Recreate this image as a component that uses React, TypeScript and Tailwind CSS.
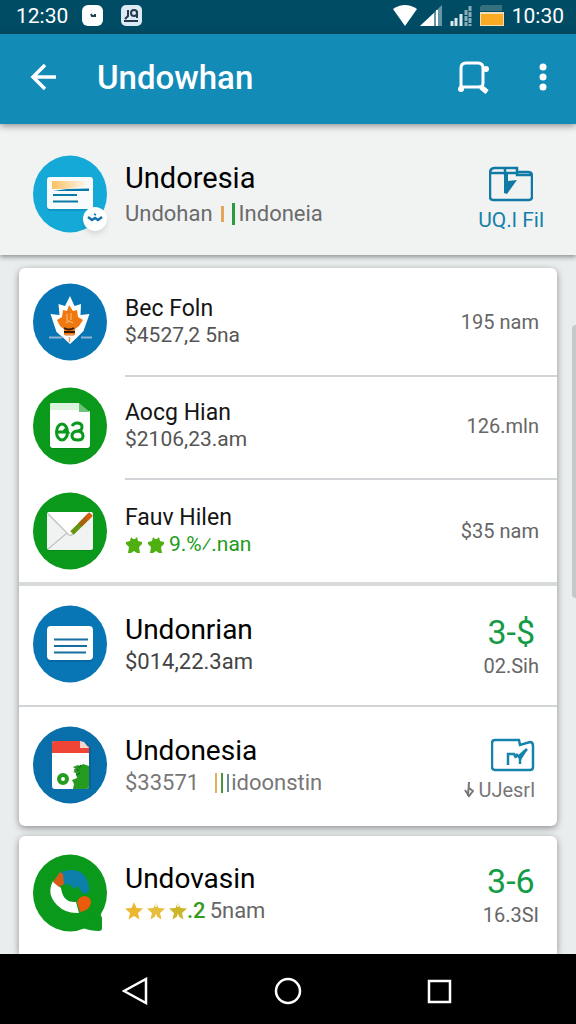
import type { ReactNode } from "react"

function Star({ color, cut = false }: { color: string; cut?: boolean }) {
  return (
    <svg className="shrink-0" width="18" height="18" viewBox="0 0 18 18" aria-hidden="true">
      <path
        d="M9 0l2.500 6 6.500.5-5 4.500 1.500 6.500L9 14l-5.500 3.500L5 11 0 6.500 6.500 6z"
        fill={color}
      />
      {cut && <path d="M9 0v5M9 12.500v5" stroke="white" strokeWidth="1.500" />}
    </svg>
  )
}

function GreenStar() {
  return (
    <svg className="shrink-0" width="18" height="18" viewBox="0 0 18 18" aria-hidden="true">
      <path
        d="M6 1l2 2h2l2-2 1 4 4 1v2l-3 3 1 6h-3l-3-2-3 2H3l1-6-3-3V6l4-1z"
        fill="#4fae10"
      />
    </svg>
  )
}

function Avatar({ color, children }: { color: string; children: ReactNode }) {
  return (
    <svg className="shrink-0" width="74" height="78" viewBox="0 0 74 78" aria-hidden="true">
      <ellipse cx="37" cy="39" rx="37" ry="38.500" fill={color} />
      {children}
    </svg>
  )
}

function CardAvatar() {
  return (
    <div className="relative shrink-0">
      <Avatar color="#14a9d6">
        <defs>
          <linearGradient id="photo" x1="0" x2="1">
            <stop offset="0" stopColor="#fbc062" />
            <stop offset="1" stopColor="#fdf6ea" />
          </linearGradient>
        </defs>
        <rect x="14" y="23" width="46" height="33" rx="3" fill="#0b86b3" opacity=".5" />
        <rect x="14" y="22" width="46" height="32" rx="3" fill="#f7fbfc" />
        <path d="M19 26h34v5l-20 3H19z" fill="url(#photo)" />
        <path d="M34 34l22-.5v2.500H20z" fill="#0a7ba8" />
        <path d="M20 40h24M20 46.500h25" stroke="#0a7ba8" strokeWidth="2.200" fill="none" />
      </Avatar>
      <span className="absolute right-0 bottom-0.5 flex size-6 items-center justify-center rounded-full bg-white shadow-md">
        <svg width="16" height="12" viewBox="0 0 16 12" aria-hidden="true">
          <path d="M1 4l4 3 3-2 3 2 4-3" stroke="#1272ac" strokeWidth="2.500" fill="none" />
          <path d="M7 1l2 1" stroke="#1272ac" strokeWidth="1.500" />
        </svg>
      </span>
    </div>
  )
}

function LeafAvatar() {
  return (
    <Avatar color="#0875b5">
      <path
        d="M37 13l4.500 10 6.500-2-.5 11 9-1-6 17-7 7-6.500 6-6.500-6-7-6-6-18 9 1-1-11 6.500 2z"
        fill="white"
      />
      <path
        d="M36 22l4 6 4-1 1 7 5 3-4 6-4 3v6H31v-6l-4-3-3-6 5-3 1-7 4 1z"
        fill="#ef7811"
      />
      <path d="M34 31v7M38 30v7M33 40l3-2 4 2" stroke="#f9b46e" strokeWidth="1.200" fill="none" />
      <path d="M31 45q5 3 10 0M31 49h11" stroke="#3c1a0b" strokeWidth="1.800" fill="none" />
      <path d="M32 52h9M36.500 54v5" stroke="#e79b61" strokeWidth="1.500" />
      <path d="M16 54.500h13M48 54.500h11" stroke="#8fb3ce" strokeWidth="2" />
    </Avatar>
  )
}

function DocAvatar() {
  return (
    <Avatar color="#0b991c">
      <path d="M19 17h27l11 9v36H19q-2 0-2-2V19q0-2 2-2z" fill="#067b14" opacity=".5" />
      <path d="M19 16h27v8h11v34q0 3-3 3H20q-3 0-3-3V18q0-2 2-2z" fill="white" />
      <path d="M17 18q0-2 2-2h27v7H17z" fill="#d9f3dc" />
      <path d="M46 16l11 9H46z" fill="#6bc477" />
      <g stroke="#0b991c" strokeWidth="3" fill="none">
        <ellipse cx="29" cy="45" rx="5.500" ry="8" />
        <path d="M24 45h10l-3-3" />
        <path d="M39 39q2-3 5-3 5 0 5 4 0 4-5 4 6 0 6 5 0 4-5 4-6 0-6-4 0-4 5-5" />
      </g>
    </Avatar>
  )
}

function MailAvatar() {
  return (
    <Avatar color="#0b991c">
      <rect x="14" y="21" width="46" height="38" rx="2" fill="#067b14" opacity=".5" />
      <rect x="14" y="20" width="46" height="38" rx="2" fill="#f1f2f2" />
      <path d="M15 20h44L37 43z" fill="white" />
      <path d="M15 22l21 21q2 1 4-1M15 57l19-16" stroke="#c1c4c3" strokeWidth="1.300" fill="none" />
      <path d="M39 41l18-18" stroke="#679412" strokeWidth="5" />
      <path d="M47 33l10-10" stroke="#a7650b" strokeWidth="5" />
      <path d="M53 27l5-5" stroke="#d85a0d" strokeWidth="5" />
    </Avatar>
  )
}

function NoteAvatar() {
  return (
    <Avatar color="#0875b5">
      <rect x="14" y="23" width="46" height="34" rx="4" fill="#055b92" opacity=".5" />
      <rect x="14" y="21" width="46" height="34" rx="4" fill="white" />
      <path d="M21 34.500h34M21 41h33M21 47.500h32" stroke="#176f9f" strokeWidth="2" />
    </Avatar>
  )
}

function ReportAvatar() {
  return (
    <Avatar color="#086fab">
      <path d="M20 17h34l4 6v40H20z" fill="#06578a" opacity=".5" />
      <path d="M22 15h25l9 7v38q0 3-3 3H22q-3 0-3-3V18q0-3 3-3z" fill="white" />
      <path d="M19 27v-9q0-3 3-3h25v5h9v7z" fill="#ef4536" />
      <path d="M47 15l4 1 5 6h-9z" fill="#f7d5d0" />
      <path
        d="M47 40l3-2 6 2v20q0 3-3 3H40l1-5-2-4 5-2-1-5-3-1 4-2-4-3 5-2z"
        fill="#279a20"
      />
      <path d="M41 44h5M43 49l4-2M46 42l2-3" stroke="#117b1c" strokeWidth="1.500" />
      <ellipse cx="30" cy="53" rx="4" ry="4" stroke="#249c20" strokeWidth="4" fill="none" />
    </Avatar>
  )
}

function PhoneAvatar() {
  return (
    <Avatar color="#0b991c">
      <path d="M68 52q-2 6 1 12v10q0 3-3 3-9 0-16-3z" fill="#0b991c" />
      <path d="M28 18q15-5 23 3 6 7 5 17l-6 2-5-8-4 3-5-5-8 1z" fill="#0e7fa8" />
      <path d="M20 27q-7 13 4 24 9 9 22 8l-3-11q-13 1-15-14z" fill="white" />
      <path d="M20 28l7-10 3 2 1 10-5 3z" fill="#d55c15" />
      <path d="M44 48q2-6 8-6 6 1 6 7-2 8-11 9z" fill="#ea5b0b" />
    </Avatar>
  )
}

function FolderIcon({ zip = false }: { zip?: boolean }) {
  if (zip) {
    return (
      <svg width="44" height="36" viewBox="0 0 44 36" fill="none" stroke="#1179a5" strokeWidth="2.500" aria-hidden="true">
        <path d="M29 6h10q4 0 4 4v21q0 3-3 3H4q-3 0-3-3V7q0-5 5-5h22v7h14M2 7h25M16 3v6" />
        <path d="M15 7v20l3 1 10-14-9 1V7z" fill="#1179a5" stroke="none" />
      </svg>
    )
  }
  return (
    <svg width="44" height="34" viewBox="0 0 44 34" fill="none" stroke="#1683ac" strokeWidth="2.500" aria-hidden="true">
      <path d="M4 2h24l1 5 10-3q3 0 3 4v21q0 3-3 3H4q-3 0-3-3V5q0-3 3-3z" />
      <path d="M17 27V16h6l2 4M29 26v-9l7-6M29 20l-4-4" />
      <path d="M29 17l8-6-7 11z" fill="#1683ac" stroke="none" />
    </svg>
  )
}

type RowProps = {
  icon: ReactNode
  title: string
  detail: ReactNode
  aside: ReactNode
  large?: boolean
}

function Row({ icon, title, detail, aside, large = false }: RowProps) {
  return (
    <div className="flex flex-1 items-center gap-[18px] pr-[18px] pl-[14px]">
      {icon}
      <div className="min-w-0 flex-1">
        <h2 className={large ? "text-[28px] leading-9 text-black" : "text-[23px] leading-[27px] text-[#151515]"}>{title}</h2>
        <div className={large ? "flex items-center text-[22px] leading-7 whitespace-pre" : "flex items-center text-[21px] leading-[27px] whitespace-pre"}>
          {detail}
        </div>
      </div>
      {aside}
    </div>
  )
}

function Amount({ children }: { children: ReactNode }) {
  return <span className="text-xl text-[#666]">{children}</span>
}

function Score({ value, note }: { value: string; note: string }) {
  return (
    <div className="pt-2 text-center">
      <p className="text-[34px] leading-9 text-[#139b46]">{value}</p>
      <p className="text-xl leading-8 text-[#666]">{note}</p>
    </div>
  )
}

function StatusBar() {
  return (
    <div className="flex h-[34px] items-center justify-between bg-[#004c65] pr-3 pb-1 pl-4 text-[21px] text-white">
      <div className="flex items-center">
        <span className="w-[50px] pt-1">12:30</span>
        <svg className="ml-4" width="21" height="21" viewBox="0 0 21 21" aria-hidden="true">
          <rect width="21" height="21" rx="6" fill="white" />
          <path d="M9 9l1 2h3V9" stroke="#21414c" strokeWidth="2" fill="none" />
        </svg>
        <svg className="ml-[18px]" width="21" height="21" viewBox="0 0 21 21" aria-hidden="true">
          <rect width="21" height="21" rx="5" fill="#dcebf3" />
          <path d="M7 5v6l-3 3M16 6v7M3 16h14" stroke="#263a50" strokeWidth="2" fill="none" />
          <circle cx="13" cy="8" r="3" stroke="#263a50" strokeWidth="2" fill="none" />
        </svg>
      </div>
      <div className="flex items-center">
        <svg width="24" height="21" viewBox="0 0 24 21" aria-hidden="true">
          <path d="M0 4q12-8 24 0L12 21z" fill="white" />
        </svg>
        <svg className="ml-[3px]" width="22" height="21" viewBox="0 0 22 21" aria-hidden="true">
          <path d="M22 0v21H0z" fill="#6695a5" />
          <path d="M14 8v13H0z" fill="white" />
          <path d="M17 5v16" stroke="white" strokeWidth="2" />
        </svg>
        <svg className="ml-2" width="22" height="21" viewBox="0 0 22 21" aria-hidden="true">
          <path d="M2 16v5M6 13v8M11 9v12" stroke="#dbe9ed" strokeWidth="3" />
          <path d="M16 5v16M20 1v20" stroke="#8badb9" strokeWidth="3" strokeDasharray="5 1" />
        </svg>
        <svg className="ml-2" width="24" height="21" viewBox="0 0 24 21" aria-hidden="true">
          <path d="M2 0h20v6H0V2z" fill="#366f7e" />
          <rect y="7" width="24" height="14" fill="#f2dfb8" />
          <rect x="1" y="9" width="22" height="11" fill="#faab23" />
        </svg>
        <span className="ml-2 pt-1">10:30</span>
      </div>
    </div>
  )
}

function AppBar() {
  return (
    <header className="z-10 flex h-[90px] items-center bg-[#128bb7] pr-6 pb-1 pl-[30px] text-white shadow-[0_2px_7px_rgba(0,0,0,0.4)]">
      <button type="button" aria-label="Back">
        <svg width="27" height="28" viewBox="0 0 27 28" fill="none" stroke="currentColor" strokeWidth="3.500" aria-hidden="true">
          <path d="M15 2L3 14l12 12M3 14h23" />
        </svg>
      </button>
      <h1 className="ml-10 flex-1 text-[33px] leading-none font-medium">Undowhan</h1>
      <button type="button" aria-label="Search" className="mr-11">
        <svg width="33" height="34" viewBox="0 0 33 34" fill="none" stroke="currentColor" strokeWidth="3" aria-hidden="true">
          <path d="M4 28V8q0-5 5-5h12q5 0 5 5v15q0 4-3 4H4M22 26l8 6" />
          <path d="M24 27l6 5" strokeWidth="5" />
          <circle cx="29" cy="9" r="3" fill="currentColor" stroke="none" />
          <circle cx="4" cy="29" r="3" fill="currentColor" stroke="none" />
        </svg>
      </button>
      <button type="button" aria-label="More options">
        <svg width="18" height="28" viewBox="0 0 18 28" fill="currentColor" aria-hidden="true">
          <circle cx="9" cy="4" r="3.500" />
          <circle cx="9" cy="14" r="3.500" />
          <circle cx="9" cy="24" r="3.500" />
        </svg>
      </button>
    </header>
  )
}

function NavBar() {
  return (
    <nav className="z-10 flex h-[70px] items-center justify-center gap-[124px] bg-black pt-1 text-white">
      <button type="button" aria-label="Back">
        <svg width="28" height="28" viewBox="0 0 28 28" fill="none" stroke="currentColor" strokeWidth="2.500" aria-hidden="true">
          <path d="M24 2v24L2 14z" />
        </svg>
      </button>
      <button type="button" aria-label="Home">
        <svg width="28" height="28" viewBox="0 0 28 28" fill="none" stroke="currentColor" strokeWidth="2.500" aria-hidden="true">
          <circle cx="14" cy="14" r="12" />
        </svg>
      </button>
      <button type="button" aria-label="Recent apps">
        <svg width="28" height="28" viewBox="0 0 28 28" fill="none" stroke="currentColor" strokeWidth="2.500" aria-hidden="true">
          <rect x="3" y="4" width="21" height="21" />
        </svg>
      </button>
    </nav>
  )
}

export default function App() {
  return (
    <div className="relative flex min-h-screen flex-col bg-[#e9edee] font-['Roboto',sans-serif]">
      <StatusBar />
      <AppBar />

      <section className="flex h-[131px] items-center gap-[18px] bg-[#f1f3f3] pt-2 pr-8 pl-[33px] shadow-[0_2px_5px_rgba(0,0,0,0.4)]">
        <CardAvatar />
        <div className="flex-1 pt-1">
          <h2 className="text-[29px] leading-9 text-black">Undoresia</h2>
          <p className="flex items-center text-[22px] leading-9 text-[#6b6b6b]">
            Undohan
            <span className="ml-2 h-4 w-[3px] bg-[#e3a65b]" />
            <span className="ml-2 h-[22px] w-[3px] bg-[#299c3d]" />
            <span className="ml-1">Indoneia</span>
          </p>
        </div>
        <button type="button" className="flex flex-col items-center pt-4 text-[21px] leading-9 text-[#1680a9]">
          <FolderIcon zip />
          UQ.l Fil
        </button>
      </section>

      <main className="flex flex-1 flex-col gap-[10px] px-[19px] pt-[13px]">
        <section className="rounded-md bg-white shadow-[0_2px_7px_rgba(0,0,0,0.4)]">
          <div className="flex h-[107px]">
            <Row
              icon={<LeafAvatar />}
              title="Bec Foln"
              detail={<span className="text-[#555]">$4527,2 5na</span>}
              aside={<Amount>195 nam</Amount>}
            />
          </div>
          <hr className="ml-[106px] border-t-2 border-[#d2d4d7]" />
          <div className="flex h-[101px] pb-1">
            <Row
              icon={<DocAvatar />}
              title="Aocg Hian"
              detail={<span className="text-[#555]">$2106,23.am</span>}
              aside={<Amount>126.mln</Amount>}
            />
          </div>
          <hr className="ml-[106px] border-t-2 border-[#d2d4d7]" />
          <div className="flex h-[102px]">
            <Row
              icon={<MailAvatar />}
              title="Fauv Hilen"
              detail={
                <>
                  <GreenStar />
                  <span className="w-1" />
                  <GreenStar />
                  <span className="ml-1 text-[#229b20]">9.%⁄.nan</span>
                </>
              }
              aside={<Amount>$35 nam</Amount>}
            />
          </div>
          <hr className="border-t-4 border-[#d9dadc]" />
          <div className="flex h-[119px] pb-1">
            <Row
              large
              icon={<NoteAvatar />}
              title="Undonrian"
              detail={<span className="text-[#444]">$014,22.3am</span>}
              aside={<Score value="3-$" note="02.Sih" />}
            />
          </div>
          <hr className="border-t-2 border-[#d2d4d7]" />
          <div className="flex h-[119px] pb-1">
            <Row
              large
              icon={<ReportAvatar />}
              title="Undonesia"
              detail={
                <span className="flex items-center text-[#777]">
                  $33571
                  <span className="ml-4 h-5 w-0.5 bg-[#dfb15f]" />
                  <span className="ml-1 h-5 w-0.5 bg-[#4d933d]" />
                  <span className="ml-1 h-[18px] w-0.5 bg-[#668b98]" />
                  <span className="ml-0.5">idoonstin</span>
                </span>
              }
              aside={
                <div className="flex flex-col items-end pt-4 pr-1 text-xl leading-9 text-[#777]">
                  <FolderIcon />
                  <span className="flex items-center gap-1">
                    <svg width="10" height="16" viewBox="0 0 10 16" fill="none" stroke="currentColor" strokeWidth="2" aria-hidden="true">
                      <path d="M5 0l-1 14M1 8l4 6 4-5-4-3" />
                    </svg>
                    UJesrl
                  </span>
                </div>
              }
            />
          </div>
        </section>

        <section className="flex min-h-[118px] flex-1 rounded-t-md bg-white pb-1 shadow-[0_2px_7px_rgba(0,0,0,0.4)]">
          <Row
            large
            icon={<PhoneAvatar />}
            title="Undovasin"
            detail={
              <>
                <Star color="#edb82f" />
                <span className="w-1" />
                <Star color="#e7bd3c" cut />
                <span className="w-1" />
                <Star color="#ccb528" cut />
                <span className="font-medium text-[#359b20]">.2</span>
                <span className="ml-1 text-[#666]">5nam</span>
              </>
            }
            aside={<Score value="3-6" note="16.3SI" />}
          />
        </section>
      </main>

      <div className="absolute top-[325px] right-0 h-[273px] w-1 rounded-l bg-[#c5c8ca]" />
      <NavBar />
    </div>
  )
}
